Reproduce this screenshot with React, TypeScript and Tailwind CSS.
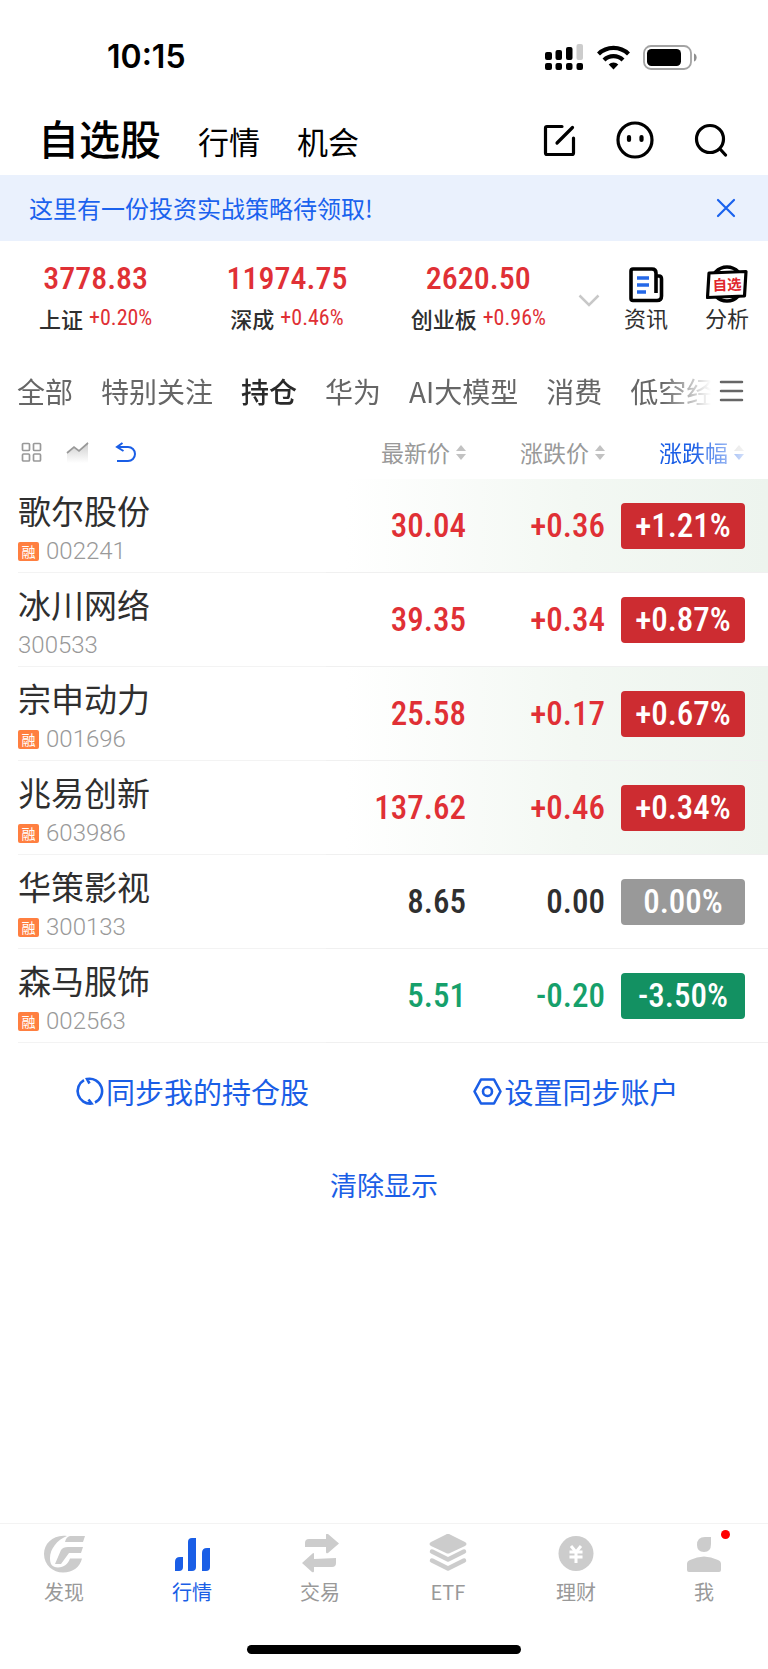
import React, { useState } from 'react';

type Trend = 'up' | 'down' | 'flat';

interface MarketIndex {
  name: string;
  value: string;
  change: string;
}

interface Stock {
  name: string;
  code: string;
  margin: boolean;
  price: string;
  change: string;
  percent: string;
  trend: Trend;
  highlighted: boolean;
}

const indices: MarketIndex[] = [
  { name: '上证', value: '3778.83', change: '+0.20%' },
  { name: '深成', value: '11974.75', change: '+0.46%' },
  { name: '创业板', value: '2620.50', change: '+0.96%' }
];

const groups = ['全部', '特别关注', '持仓', '华为', 'AI大模型', '消费', '低空经济'];

const stocks: Stock[] = [
  { name: '歌尔股份', code: '002241', margin: true, price: '30.04', change: '+0.36', percent: '+1.21%', trend: 'up', highlighted: true },
  { name: '冰川网络', code: '300533', margin: false, price: '39.35', change: '+0.34', percent: '+0.87%', trend: 'up', highlighted: false },
  { name: '宗申动力', code: '001696', margin: true, price: '25.58', change: '+0.17', percent: '+0.67%', trend: 'up', highlighted: true },
  { name: '兆易创新', code: '603986', margin: true, price: '137.62', change: '+0.46', percent: '+0.34%', trend: 'up', highlighted: true },
  { name: '华策影视', code: '300133', margin: true, price: '8.65', change: '0.00', percent: '0.00%', trend: 'flat', highlighted: false },
  { name: '森马服饰', code: '002563', margin: true, price: '5.51', change: '-0.20', percent: '-3.50%', trend: 'down', highlighted: false }
];

const textColor: Record<Trend, string> = {
  up: 'text-[#e03035]',
  down: 'text-[#16a06b]',
  flat: 'text-[#2f2f2f]'
};

const badgeColor: Record<Trend, string> = {
  up: 'bg-[#cd2c31]',
  down: 'bg-[#139162]',
  flat: 'bg-[#999999]'
};

const numberFont = "font-['Roboto_Condensed','Roboto',sans-serif] font-medium";

const StatusBar = () => (
  <div className="flex h-24 items-center justify-between pt-[18px] pr-[71px] pl-[107px]">
    <span className="font-['Inter'] text-[32px] leading-none font-semibold">10:15</span>
    <div className="flex items-center gap-[13px]">
      <svg width="39" height="28" viewBox="0 0 39 28">
        <rect x="0" y="9" width="7" height="8" rx="2" />
        <rect x="10.500" y="7" width="6.500" height="10" rx="2" />
        <rect x="21" y="4" width="6.500" height="13" rx="2" />
        <rect x="31.500" y="1" width="6.500" height="16" rx="2" fill="#cccccc" />
        <rect x="0" y="20" width="7" height="7" rx="2" />
        <rect x="10.500" y="20" width="6.500" height="7" rx="2" />
        <rect x="21" y="20" width="6.500" height="7" rx="2" />
        <rect x="31.500" y="20" width="6.500" height="7" rx="2" />
      </svg>
      <svg width="33" height="25" viewBox="0 0 33 25" fill="none" stroke="currentColor" strokeWidth="4.200">
        <path d="M1.500 9A21.500 21.500 0 0 1 31.500 9" />
        <path d="M7 15A13.500 13.500 0 0 1 26 15" />
        <path d="M16.500 24.500L11.700 19.500A6.800 6.800 0 0 1 21.300 19.500Z" fill="currentColor" stroke="none" />
      </svg>
      <svg width="54" height="25" viewBox="0 0 54 25">
        <rect x="1" y="1" width="47" height="23" rx="7" fill="none" stroke="#a3a3a3" strokeWidth="1.800" />
        <rect x="4" y="4" width="34" height="17" rx="4.500" />
        <path d="M51 8.500C54.500 9.500 54.500 15.500 51 16.500Z" fill="#8f8f8f" />
      </svg>
    </div>
  </div>
);

const SortArrows = ({ active = false }: { active?: boolean }) => (
  <svg width="10" height="15" viewBox="0 0 10 15" className="shrink-0">
    <path d="M5 0L10 6H0Z" fill="#c2c2c2" />
    <path d="M5 15L0 9H10Z" fill={active ? '#1a5ee6' : '#c2c2c2'} />
  </svg>
);

const navItems = [
  {
    label: '发现',
    icon: (
      <>
        <path d="M25 2C12 0 2 9 2 20C2 31 11 38.500 21 38.500C31 38.500 38 33 40 24.500H28C26 30 22 33.500 16 33.500C10 33.500 8 30 8 24C8 15 15 6 25 2Z" />
        <path d="M28 2H43L41 8H23Q24 3 28 2Z" />
        <path d="M26 13H41L39 19H27L19 30H13L19 16Q21 13 26 13Z" />
      </>
    )
  },
  {
    label: '行情',
    icon: (
      <>
        <path d="M5 28Q5 23 10 23H13V33Q13 37 9 37H5Z" />
        <path d="M18 8Q18 4 22 4H26V33Q26 37 22 37H18Z" />
        <path d="M32 19Q32 14 37 14H40V33Q40 37 36 37H32Z" />
      </>
    )
  },
  {
    label: '交易',
    icon: (
      <>
        <path d="M7 13V9Q7 5 11 5H28V1Q28-1 30 0L41 9.500L30 19Q28 20 28 18V13Z" />
        <path d="M38 24V29Q38 33 34 33H16V37Q16 39 14 38L4 29L14 20Q16 18 16 20V25Z" />
      </>
    )
  },
  {
    label: 'ETF',
    icon: (
      <>
        <path d="M20 0.500Q22-1 24 0.500L39 8Q42 10 39 12L24 19Q22 20 20 19L5 12Q2 10 5 8Z" />
        <path d="M6 17.500L22 25.500L38 17.500" fill="none" stroke="currentColor" strokeWidth="4.500" strokeLinecap="round" strokeLinejoin="round" />
        <path d="M6 26.500L22 34.500L38 26.500" fill="none" stroke="currentColor" strokeWidth="4.500" strokeLinecap="round" strokeLinejoin="round" />
      </>
    )
  },
  {
    label: '理财',
    icon: (
      <>
        <circle cx="22" cy="19.500" r="17.500" />
        <path d="M17 12L22 18L27 12M15.500 18H28.500M15.500 23H28.500M22 18V29" fill="none" stroke="#ffffff" strokeWidth="3" />
      </>
    )
  },
  {
    label: '我',
    icon: (
      <>
        <path d="M15 11Q15 3 23 3H29V10Q29 18 22 18Q15 18 15 11Z" />
        <path d="M5 30Q5 27 8 26Q22 19 36 26Q39 27 39 30V36Q39 38 37 38H7Q5 38 5 36Z" />
      </>
    )
  }
];

const App = () => {
  const [activeGroup, setActiveGroup] = useState('持仓');
  const [activeNav, setActiveNav] = useState('行情');
  const [showBanner, setShowBanner] = useState(true);

  return (
    <div className="flex min-h-screen flex-col overflow-x-hidden bg-white font-['Noto_Sans_CJK_SC',sans-serif] text-black">
      <StatusBar />

      {/* Header */}
      <header className="flex h-[79px] items-center justify-between pt-[9px] pr-10 pl-[38px]">
        <nav className="flex items-center">
          <a href="#watchlist" className="pb-1.5 text-[41px] leading-none font-medium">自选股</a>
          <a href="#market" className="ml-[37px] text-[31px] leading-none">行情</a>
          <a href="#chance" className="ml-[37px] text-[31px] leading-none">机会</a>
        </nav>
        <div className="flex items-center gap-10">
          <button aria-label="编辑">
            <svg width="33" height="33" viewBox="0 0 33 33" fill="none" stroke="currentColor" strokeWidth="3.200" strokeLinecap="round" strokeLinejoin="round">
              <path d="M19 2.500H4Q2.500 2.500 2.500 4V29Q2.500 30.500 4 30.500H29Q30.500 30.500 30.500 29V14M29.500 3.500L14 19" />
            </svg>
          </button>
          <button aria-label="客服">
            <svg width="38" height="38" viewBox="0 0 38 38" fill="none" stroke="currentColor">
              <circle cx="19" cy="19" r="17" strokeWidth="3.200" />
              <path d="M13 16V19M25.500 16V19" strokeWidth="4.200" strokeLinecap="round" />
            </svg>
          </button>
          <button aria-label="搜索">
            <svg width="34" height="34" viewBox="0 0 34 34" fill="none" stroke="currentColor" strokeWidth="3.200" strokeLinecap="round">
              <circle cx="16" cy="16" r="13.500" />
              <path d="M26.500 26.500L31.500 32" />
            </svg>
          </button>
        </div>
      </header>

      {/* Banner */}
      {showBanner && (
        <div className="flex h-[66px] items-center justify-between bg-[#eaf1fd] pr-[32px] pl-[29px] text-[#1a62ee]">
          <a href="#strategy" className="text-[24px] leading-none">这里有一份投资实战策略待领取!</a>
          <button aria-label="关闭" onClick={() => setShowBanner(false)}>
            <svg width="20" height="20" viewBox="0 0 20 20" stroke="currentColor" strokeWidth="2.200" strokeLinecap="round">
              <path d="M2 2L18 18M18 2L2 18" />
            </svg>
          </button>
        </div>
      )}

      {/* Indices */}
      <section className="flex h-[116px] items-start pr-[19px]">
        <div className="grid flex-1 grid-cols-3">
          {indices.map((index) => (
            <div key={index.name} className="flex flex-col items-center pt-[19px]">
              <span className={`text-[32px] leading-9 text-[#e03035] ${numberFont}`}>{index.value}</span>
              <div className="mt-2 flex items-center gap-1.5 leading-7 whitespace-nowrap">
                <span className="text-[22px] font-medium text-[#2f2f2f]">{index.name}</span>
                <span className="font-['Roboto_Condensed','Roboto',sans-serif] text-[22px] text-[#e03035]">{index.change}</span>
              </div>
            </div>
          ))}
        </div>
        <button aria-label="展开" className="mt-[53px] mr-6 ml-1">
          <svg width="22" height="13" viewBox="0 0 22 13" fill="none" stroke="#c8c8c8" strokeWidth="2.500">
            <path d="M1.500 1.500L11 11L20.500 1.500" />
          </svg>
        </button>
        <button className="flex flex-col items-center pt-6 text-[22px] leading-7 text-[#2f2f2f]">
          <svg width="36" height="38" viewBox="0 0 36 38" fill="none">
            <path d="M28 11H31Q33.500 11 33.500 14V31Q33.500 35.500 29 35.500H5Q3 35.500 3 33.500V6Q3 4 5 4H24Q28 4 28 8V28" stroke="#000000" strokeWidth="3.600" />
            <path d="M9 13H21M9 20H21M9 27H18" stroke="#2468e8" strokeWidth="3.600" />
          </svg>
          资讯
        </button>
        <button className="ml-[37px] flex flex-col items-center pt-6 text-[22px] leading-7 text-[#2f2f2f]">
          <svg width="42" height="38" viewBox="0 0 42 38" fill="none">
            <ellipse cx="21" cy="19" rx="16" ry="17" stroke="#000000" strokeWidth="3.600" />
            <path d="M3 8L40 6.500L38.500 31L1.500 32.500Z" fill="#ffffff" stroke="#000000" strokeWidth="3.200" strokeLinejoin="round" />
            <text x="6.500" y="25" fontSize="14.500" fontWeight="700" fill="#e0252b" transform="rotate(-2 21 19)">自选</text>
          </svg>
          分析
        </button>
      </section>

      {/* Groups */}
      <div className="flex h-[70px] items-center pr-6 pb-0.5 pl-[17px]">
        <div className="flex flex-1 gap-7 overflow-hidden [mask-image:linear-gradient(to_right,black_93%,transparent)]">
          {groups.map((group) => (
            <button
              key={group}
              onClick={() => setActiveGroup(group)}
              className={`shrink-0 text-[28px] leading-[42px] ${
                activeGroup === group ? 'font-medium text-[#2a2a2a]' : 'text-[#666666]'
              }`}
            >
              {group}
            </button>
          ))}
        </div>
        <button aria-label="全部分组" className="ml-2">
          <svg width="25" height="22" viewBox="0 0 25 22" stroke="#666666" strokeWidth="2.500" strokeLinecap="round">
            <path d="M2 2H23M2 11H23M2 20H23" />
          </svg>
        </button>
      </div>

      {/* Stocks */}
      <table className="w-full table-fixed border-separate border-spacing-0">
        <thead>
          <tr className="h-[52px] text-[23px] leading-none text-[#999999]">
            <th className="pb-0.5 pl-[21px]">
              <div className="flex items-center">
                <button aria-label="宫格">
                  <svg width="21" height="21" viewBox="0 0 21 21" fill="none" stroke="#999999" strokeWidth="1.700">
                    <rect x="1.500" y="1.500" width="7" height="7" rx="1" />
                    <rect x="12.500" y="1.500" width="7" height="7" rx="1" />
                    <rect x="1.500" y="12" width="7" height="7" rx="1" />
                    <rect x="12.500" y="12" width="7" height="7" rx="1" />
                  </svg>
                </button>
                <button aria-label="走势" className="ml-6">
                  <svg width="23" height="22" viewBox="0 0 23 22" fill="none">
                    <defs>
                      <linearGradient id="trend" x1="0" y1="0" x2="0" y2="1">
                        <stop offset="0" stopColor="#cccccc" />
                        <stop offset="1" stopColor="#ffffff" />
                      </linearGradient>
                    </defs>
                    <path d="M1 12L8 6L13 10L22 1V22H1Z" fill="url(#trend)" />
                    <path d="M1 12L8 6L13 10L22 2" stroke="#999999" strokeWidth="1.700" />
                  </svg>
                </button>
                <button aria-label="恢复" className="ml-[26px]">
                  <svg width="22" height="21" viewBox="0 0 22 21" fill="none" stroke="#1a5ee6" strokeWidth="2">
                    <path d="M7.500 1L2 5L8.500 9M2 5H13A7 7 0 0 1 13 19H2" />
                  </svg>
                </button>
              </div>
            </th>
            <th className="w-[140px] pb-0.5 font-normal">
              <button className="ml-auto flex items-center gap-1.5">最新价<SortArrows /></button>
            </th>
            <th className="w-[139px] pb-0.5 font-normal">
              <button className="ml-auto flex items-center gap-1.5">涨跌价<SortArrows /></button>
            </th>
            <th className="w-[163px] pr-[24px] pb-0.5 font-normal text-[#1a5ee6]">
              <button className="ml-auto flex items-center gap-1.5 [mask-image:linear-gradient(to_right,black_40%,rgb(0_0_0/0.2))]">
                涨跌幅<SortArrows active />
              </button>
            </th>
          </tr>
        </thead>
        <tbody>
          {stocks.map((stock) => (
            <tr
              key={stock.code}
              className={stock.highlighted ? 'bg-linear-to-r from-white from-45% via-[#f3f8f3] via-75% to-[#edf4ee]' : ''}
            >
              <td className="h-[94px] p-0 pl-[18px]">
                <div className="flex h-[94px] flex-col border-b border-[#f3f3f3] pt-[13px]">
                  <span className="text-[33px] leading-9 whitespace-nowrap text-[#2f2f2f]">{stock.name}</span>
                  <div className="mt-[9px] flex items-center gap-[7px]">
                    {stock.margin && (
                      <span className="flex h-[19px] w-[21px] items-center justify-center rounded-xs bg-[#ff7f40] text-[14px] leading-none text-white">
                        融
                      </span>
                    )}
                    <span className="font-['Roboto'] text-[24px] leading-7 font-light text-[#999999]">{stock.code}</span>
                  </div>
                </div>
              </td>
              <td className={`border-b border-[#f0f0f0] p-0 text-right text-[33px] leading-none ${numberFont} ${textColor[stock.trend]}`}>
                {stock.price}
              </td>
              <td className={`border-b border-[#f0f0f0] p-0 text-right text-[33px] leading-none ${numberFont} ${textColor[stock.trend]}`}>
                {stock.change}
              </td>
              <td className="border-b border-[#f0f0f0] p-0 pr-[23px]">
                <span
                  className={`ml-auto flex h-[46px] w-[124px] items-center justify-center rounded-sm text-[33px] leading-none text-white ${numberFont} ${badgeColor[stock.trend]}`}
                >
                  {stock.percent}
                </span>
              </td>
            </tr>
          ))}
        </tbody>
      </table>

      {/* Account actions */}
      <div className="grid grid-cols-2 pt-[30px] text-[29px] leading-9 text-[#1a5ee6]">
        <button className="flex items-center justify-center gap-0.5">
          <svg width="29" height="29" viewBox="0 0 29 29" fill="none" stroke="currentColor" strokeWidth="2.600">
            <path d="M9 3.200A12.500 12.500 0 0 0 16.500 26.500L13.500 22.500" />
            <path d="M20 25.500A12.500 12.500 0 0 0 12 2L14.500 6.500" />
          </svg>
          同步我的持仓股
        </button>
        <button className="flex items-center justify-center gap-0.5">
          <svg width="29" height="29" viewBox="0 0 29 29" fill="none" stroke="currentColor" strokeWidth="2.600" strokeLinejoin="round">
            <path d="M8 2.500H21L27.500 14.500L21 26.500H8L1.500 14.500Z" />
            <circle cx="14.500" cy="14.500" r="4.500" />
          </svg>
          设置同步账户
        </button>
      </div>
      <button className="mx-auto mt-[58px] text-[27px] leading-9 text-[#1a5ee6]">清除显示</button>

      {/* Bottom navigation */}
      <nav className="mt-auto grid grid-cols-6 border-t border-[#f3f3f3] pt-[10px]">
        {navItems.map((item) => (
          <button
            key={item.label}
            onClick={() => setActiveNav(item.label)}
            className={`flex flex-col items-center ${activeNav === item.label ? 'text-[#1a5ee6]' : 'text-[#cccccc]'}`}
          >
            <span className="relative">
              <svg width="44" height="40" viewBox="0 0 44 40" fill="currentColor">{item.icon}</svg>
              {item.label === '我' && (
                <span className="absolute -top-1 -right-1 size-[9px] rounded-full bg-[#ff0000]" />
              )}
            </span>
            <span className={`mt-1 text-[20px] leading-7 ${activeNav === item.label ? 'text-[#1a5ee6]' : 'text-[#999999]'}`}>
              {item.label}
            </span>
          </button>
        ))}
      </nav>
      <div className="mx-auto mt-[39px] mb-[15px] h-[9px] w-[274px] rounded-full bg-black" />
    </div>
  );
};

export default App;
